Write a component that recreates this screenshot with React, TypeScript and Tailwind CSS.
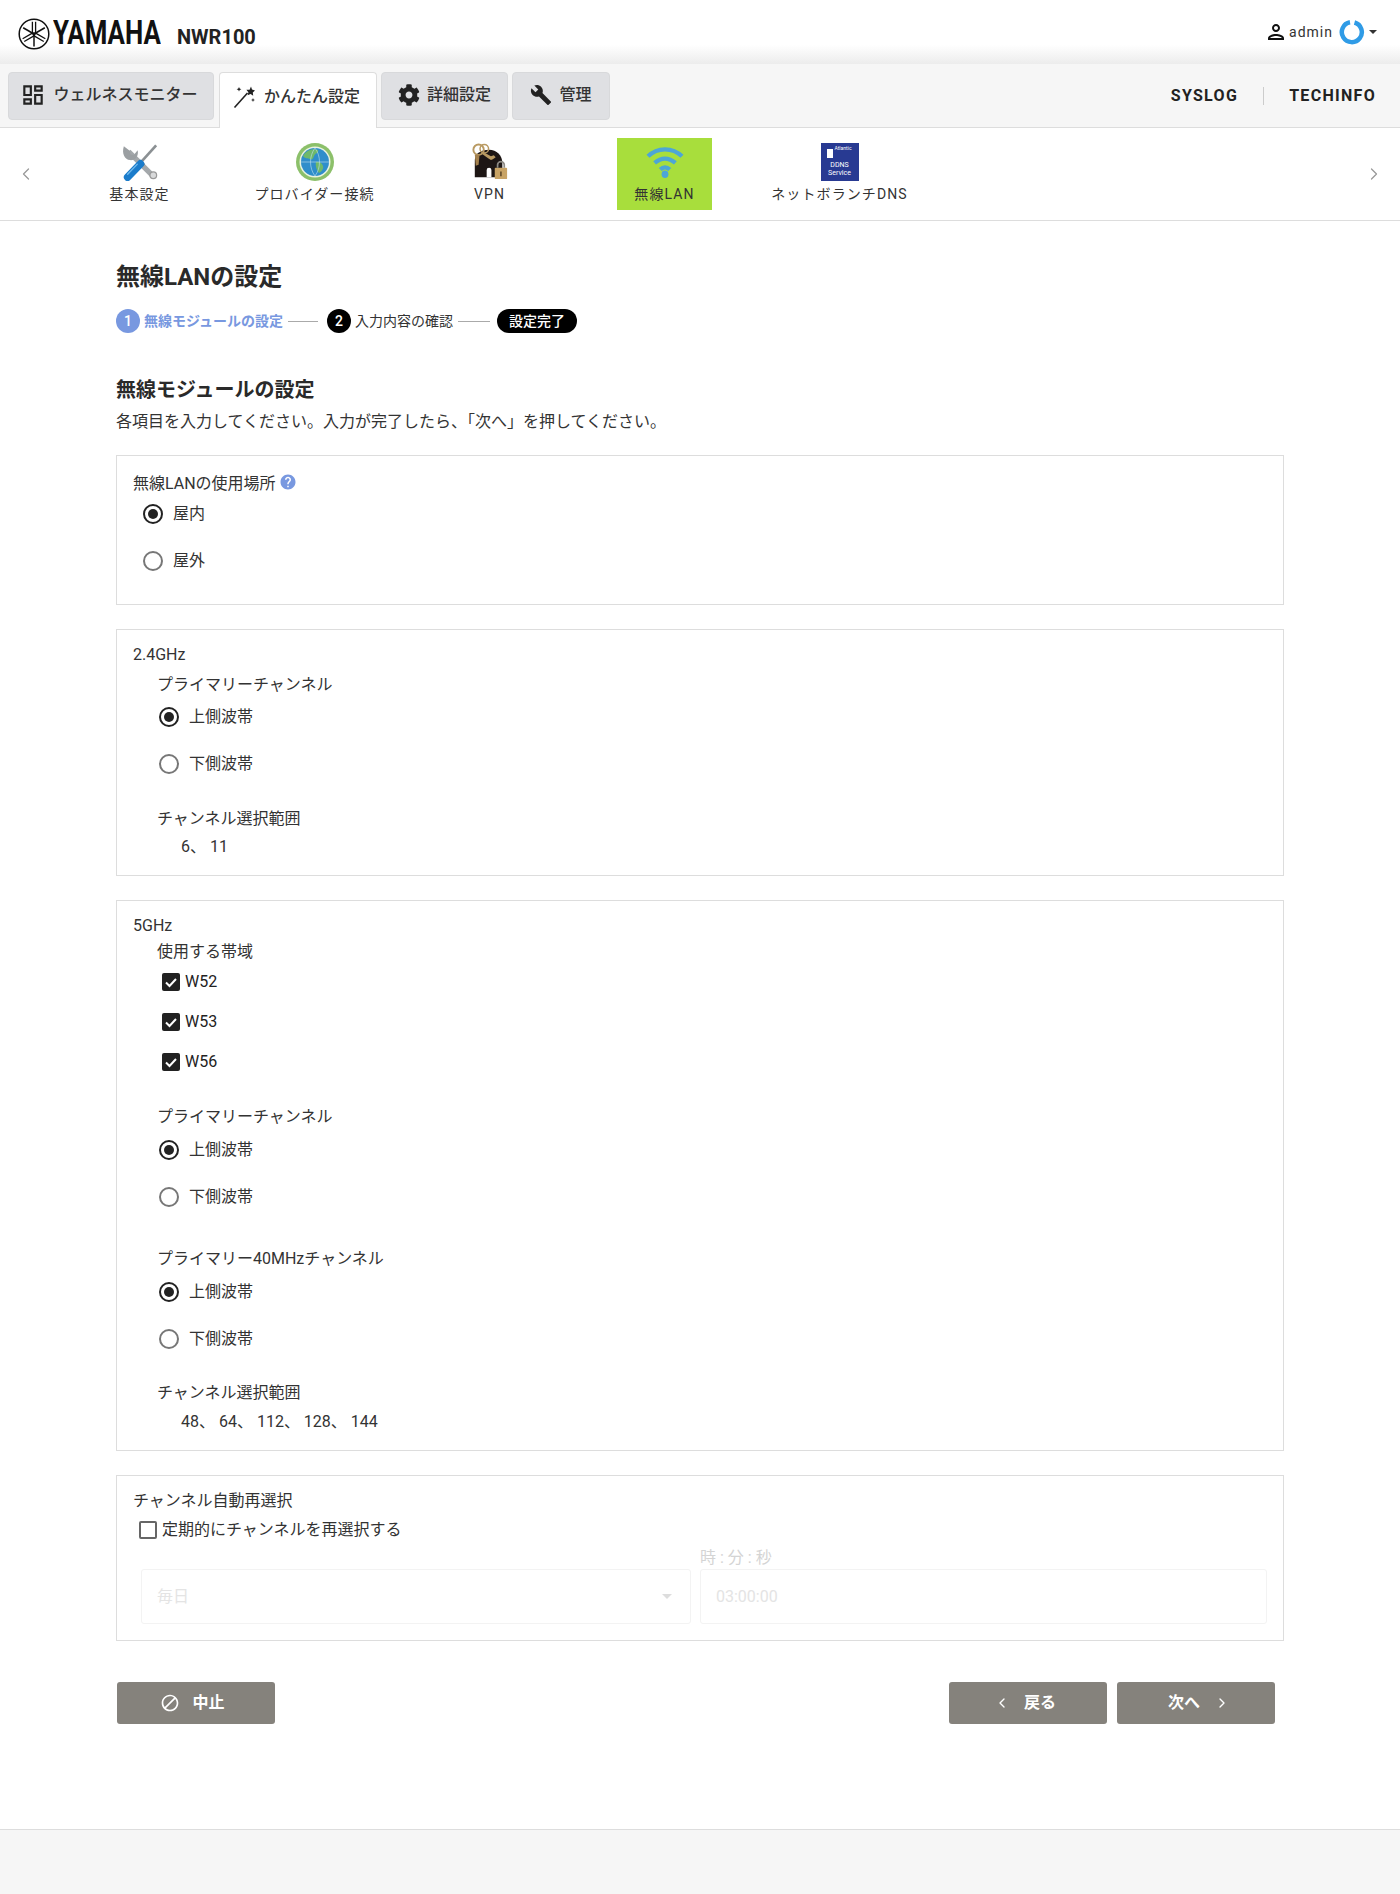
import { ChevronLeft, ChevronRight } from "lucide-react";
import { FaCog } from "react-icons/fa";
import { MdBuild, MdHelp, MdOutlineBlock, MdOutlineDashboard, MdOutlinePerson } from "react-icons/md";
import type { ReactNode } from "react";

const font = "[font-family:Roboto,'Noto_Sans_CJK_JP',sans-serif]";

function YamahaMark() {
  return (
    <svg viewBox="0 0 32 32" className="h-[32px] w-[32px] shrink-0">
      <circle cx="16" cy="16" r="14.8" fill="#fff" stroke="#111" strokeWidth="1.5" />
      {[0, 120, 240].map((a) => (
        <g key={a} transform={`rotate(${a} 16 16)`} stroke="#111" fill="none">
          <path d="M16 17.5V28.5" strokeWidth="1.5" />
          <path d="M14.4 3.8V14.5c0 1.2.6 2 1.6 2s1.6-.8 1.6-2V3.8" strokeWidth="1.3" />
        </g>
      ))}
    </svg>
  );
}

function WandIcon() {
  return (
    <svg viewBox="0 0 24 24" className="h-[24px] w-[24px]" fill="#222">
      <path d="M1.5 22.5L14.5 8" stroke="#222" strokeWidth="1.6" fill="none" />
      <path d="M18 1.5l1 3 3 1-2.2 2 .4 3.2-2.6-1.7-3 1.2.8-3-2-2.4 3.2-.1z" />
      <path d="M6 2l.7 1.6L8.4 4.3l-1.7.7L6 6.6l-.7-1.6L3.6 4.3l1.7-.7zM20 13l.6 1.4 1.4.6-1.4.6-.6 1.4-.6-1.4-1.4-.6 1.4-.6z" />
    </svg>
  );
}

function ToolsIcon() {
  return (
    <svg viewBox="0 0 40 40" className="h-[38px] w-[38px]">
      <path d="M8 9L33 34" stroke="#a4a8ab" strokeWidth="5.5" />
      <path d="M3 3.5l6.5 5 .5 3.5 3.5.5 4-5c1.5 6-2.5 11-8 10.5C4 18 .5 11 3 3.5z" fill="#9b9fa2" />
      <circle cx="34" cy="34" r="3.5" fill="#d8d9da" stroke="#999" strokeWidth="1.3" />
      <path d="M22 19L37 2.5" stroke="#8b9093" strokeWidth="2.8" />
      <path d="M20 17.5l5 4.5-2 2.5-5-4.5z" fill="#5b6164" />
      <path d="M20.5 22L7 36" stroke="#1b7ccb" strokeWidth="8" strokeLinecap="round" />
      <path d="M17 22.5L7 33" stroke="#6fb8ec" strokeWidth="1.5" strokeLinecap="round" />
    </svg>
  );
}

function GlobeIcon() {
  return (
    <svg viewBox="0 0 40 40" className="h-[40px] w-[40px]">
      <circle cx="20" cy="20" r="19" fill="#8cc06a" />
      <circle cx="20" cy="20" r="15.5" fill="#e8f2e0" />
      <circle cx="20" cy="20" r="14" fill="#2f8ecb" />
      <path d="M8 14c3-6 10-8 15-6 1 3-3 3-4 6s-2 4-4 3-5 0-7-3zM21 20c3-1 6 1 7 4s-2 6-4 7c-2-3-4-7-3-11z" fill="#6fb86b" />
      <path d="M6 20h28M20 6c-6 8-6 20 0 28M20 6c6 8 6 20 0 28" stroke="#bfe0ee" strokeWidth=".6" fill="none" />
    </svg>
  );
}

function VpnIcon() {
  return (
    <svg viewBox="0 0 40 40" className="h-[38px] w-[38px]">
      <path d="M4 36V18C4 10 12 7 19 7c8 0 14 6 14 14v15z" fill="#1d1614" />
      <path d="M19 26a2.5 2.5 0 012.5 2.5V36h-5v-7.5A2.5 2.5 0 0119 26z" fill="#fff" />
      <circle cx="8" cy="7" r="5.5" fill="none" stroke="#b99a62" strokeWidth="2" />
      <circle cx="14" cy="6" r="4.5" fill="none" stroke="#b99a62" strokeWidth="1.6" />
      <path d="M12 9l9 5 3-1 2 2-3 2-2 1-3-2-7-5z" fill="#b99a62" />
      <path d="M4 12l1 12 3-1 1-11z" fill="#a3804c" />
      <rect x="25" y="26" width="13" height="12" rx="1" fill="#c8a365" />
      <path d="M28 26v-3a3.5 3.5 0 017 0v3" fill="none" stroke="#8d8a84" strokeWidth="1.8" />
      <rect x="30.7" y="30" width="1.6" height="5" fill="#5a4526" />
    </svg>
  );
}

function WifiIcon() {
  return (
    <svg viewBox="0 0 40 36" className="h-[34px] w-[38px]" fill="none" stroke="#4da6d6" strokeWidth="4.5">
      <path d="M2 12C12 2 28 2 38 12" />
      <path d="M9 19c7-6 15-6 22 0" />
      <path d="M15 26c3-3 7-3 10 0" />
      <ellipse cx="20" cy="31" rx="3.6" ry="4" fill="#4da6d6" stroke="none" />
    </svg>
  );
}

function DdnsIcon() {
  return (
    <div className="flex h-[38px] w-[38px] flex-col items-center bg-[#283a92] pt-[2px] text-white">
      <div className="flex h-[14px] w-full items-start justify-center gap-[1px] text-[5px] leading-[5px]">
        <span className="mt-[4px] h-[9px] w-[6px] bg-white" />
        <span className="mt-[1px]">Atlantic</span>
      </div>
      <span className="mt-[2px] text-[7px] leading-[8px]">DDNS</span>
      <span className="text-[7px] leading-[8px]">Service</span>
    </div>
  );
}

function Tab({ icon, label, width, active }: { icon: ReactNode; label: string; width: string; active?: boolean }) {
  return (
    <div
      className={
        active
          ? `${width} -mb-[8px] flex h-[56px] items-center justify-center gap-[7px] rounded-t-[4px] border border-b-0 border-[#ddd] bg-white pb-[8px] text-[16px] font-medium text-[#333]`
          : `${width} flex h-[48px] items-center justify-center gap-[7px] rounded-[4px] border border-[#d8d9db] bg-[#dfe0e3] pb-[2px] text-[16px] font-medium text-[#333]`
      }
    >
      {icon}
      <span>{label}</span>
    </div>
  );
}

function NavItem({ icon, label, active }: { icon: ReactNode; label: string; active?: boolean }) {
  return (
    <div className="flex w-[175px] justify-center">
      <div className={active ? "flex h-[72px] w-[95px] flex-col items-center bg-[#a8de3c]" : "flex h-[72px] w-[150px] flex-col items-center"}>
        <div className="mt-[5px] flex h-[38px] items-center justify-center">{icon}</div>
        <span className="mt-[3px] text-[14px] leading-[20px] tracking-[1.1px] text-[#333] whitespace-nowrap">{label}</span>
      </div>
    </div>
  );
}

function Box({ children, className }: { children: ReactNode; className: string }) {
  return <section className={`border border-[#ddd] ${className}`}>{children}</section>;
}

function Radio({ label, checked, className }: { label: string; checked?: boolean; className: string }) {
  return (
    <div className={`flex h-6 items-center gap-[10px] text-[16px] text-[#333] ${className}`}>
      <span className={checked ? "flex h-5 w-5 items-center justify-center rounded-full border-2 border-[#222]" : "h-5 w-5 rounded-full border-2 border-[#777]"}>
        {checked && <span className="h-[10px] w-[10px] rounded-full bg-[#222]" />}
      </span>
      <span>{label}</span>
    </div>
  );
}

function Check({ label, className }: { label: string; className: string }) {
  return (
    <div className={`flex h-6 items-center gap-[5px] text-[16px] text-[#222] ${className}`}>
      <span className="flex h-[18px] w-[18px] items-center justify-center rounded-[2px] bg-[#222]">
        <svg viewBox="0 0 18 18" className="h-[18px] w-[18px]" fill="none" stroke="#fff" strokeWidth="2">
          <path d="M4 9.5l3.5 3.5L14 6" />
        </svg>
      </span>
      <span>{label}</span>
    </div>
  );
}

function Label({ children, className }: { children: ReactNode; className: string }) {
  return <div className={`h-6 text-[16px] leading-6 text-[#333] ${className}`}>{children}</div>;
}

function ActionButton({ children, className }: { children: ReactNode; className: string }) {
  return (
    <button className={`flex h-[42px] w-[158px] items-center justify-center rounded-[3px] bg-[#85827c] text-[16px] font-bold text-white ${className}`}>
      {children}
    </button>
  );
}

export default function App() {
  return (
    <div className={`flex min-h-[1894px] flex-col bg-white text-[#333] ${font}`}>
      {/* top header */}
      <header className="flex h-[64px] items-start justify-between bg-gradient-to-b from-white from-70% to-[#ececec] pl-[18px] pr-[23px]">
        <div className="mt-[16px] flex items-center">
          <YamahaMark />
          <div className="ml-[3px] w-[124px]">
            <span className="inline-block origin-left scale-x-[0.76] text-[34px] font-bold leading-[32px] text-[#111]">YAMAHA</span>
          </div>
          <span className="mt-[7px] text-[20px] font-bold leading-[24px] text-[#222]">NWR100</span>
        </div>
        <div className="mt-[19px] flex items-center">
          <MdOutlinePerson className="h-[24px] w-[24px] text-[#111]" />
          <span className="ml-[1px] text-[14px] tracking-[1px] text-[#333]">admin</span>
          <svg viewBox="0 0 26 26" className="ml-[6px] h-[26px] w-[26px]" fill="none" stroke="#2f9be6" strokeWidth="4.5">
            <path d="M15.5 3.5a10 10 0 11-4.5-.2" />
          </svg>
          <span className="ml-[4px] h-0 w-0 border-x-[4px] border-t-[4px] border-x-transparent border-t-[#333]" />
        </div>
      </header>

      {/* main tabs */}
      <nav className="flex h-[64px] items-start justify-between border-b border-[#ddd] bg-[#f6f6f6] pl-[8px] pr-[24px] pt-[8px]">
        <div className="flex">
          <Tab width="w-[206px] pr-[4px]" label="ウェルネスモニター" icon={<MdOutlineDashboard className="h-[26px] w-[26px] text-[#222]" />} />
          <Tab width="ml-[5px] w-[158px] pr-[3px]" active label="かんたん設定" icon={<WandIcon />} />
          <Tab width="ml-[4px] w-[127px]" label="詳細設定" icon={<FaCog className="h-[22px] w-[22px] text-[#222]" />} />
          <Tab width="ml-[4px] w-[98px]" label="管理" icon={<MdBuild className="h-[22px] w-[22px] text-[#222]" />} />
        </div>
        <div className="flex h-[48px] items-center text-[16px] font-bold tracking-[1.3px] text-[#222]">
          <span>SYSLOG</span>
          <span className="mx-[25px] h-[18px] w-px bg-[#ccc]" />
          <span>TECHINFO</span>
        </div>
      </nav>

      {/* sub navigation */}
      <div className="flex h-[93px] items-center border-b border-[#ddd]">
        <ChevronLeft className="ml-[16px] h-[20px] w-[20px] text-[#999]" strokeWidth={1.5} />
        <div className="ml-[16px] flex">
          <NavItem icon={<ToolsIcon />} label="基本設定" />
          <NavItem icon={<GlobeIcon />} label="プロバイダー接続" />
          <NavItem icon={<VpnIcon />} label="VPN" />
          <NavItem icon={<WifiIcon />} label="無線LAN" active />
          <NavItem icon={<DdnsIcon />} label="ネットボランチDNS" />
        </div>
        <ChevronRight className="ml-auto mr-[16px] h-[20px] w-[20px] text-[#999]" strokeWidth={1.5} />
      </div>

      <main className="flex flex-1 flex-col px-[116px]">
        <h1 className="mt-[40px] text-[24px] font-bold leading-[32px] text-[#2a2a2a]">無線LANの設定</h1>

        {/* steps */}
        <div className="mt-[16px] flex h-6 items-center text-[14px]">
          <span className="flex h-6 w-6 items-center justify-center rounded-full bg-[#7898e0] font-medium text-white">1</span>
          <span className="ml-[4px] font-bold text-[#7898e0]">無線モジュールの設定</span>
          <span className="ml-[5px] h-px w-[30px] bg-[#aaa]" />
          <span className="ml-[9px] flex h-6 w-6 items-center justify-center rounded-full bg-black font-medium text-white">2</span>
          <span className="ml-[4px] text-[#333]">入力内容の確認</span>
          <span className="ml-[5px] h-px w-[32px] bg-[#aaa]" />
          <span className="ml-[7px] flex h-6 w-[80px] items-center justify-center rounded-full bg-black font-medium text-white">設定完了</span>
        </div>

        <h2 className="mt-[43px] text-[20px] font-bold leading-[28px] text-[#2a2a2a]">無線モジュールの設定</h2>
        <p className="mt-[6px] text-[16px] leading-[24px] text-[#333]">各項目を入力してください。入力が完了したら、「次へ」を押してください。</p>

        {/* usage location */}
        <Box className="mt-[21px] pb-[31px] pl-[16px] pr-[16px] pt-[16px]">
          <div className="flex h-6 items-center text-[16px] text-[#333]">
            <span>無線LANの使用場所</span>
            <MdHelp className="mb-[5px] ml-[3px] h-[18px] w-[18px] text-[#7898e0]" />
          </div>
          <Radio className="ml-[10px] mt-[6px]" label="屋内" checked />
          <Radio className="ml-[10px] mt-[23px]" label="屋外" />
        </Box>

        {/* 2.4GHz */}
        <Box className="mt-[24px] pb-[16px] pl-[16px] pr-[16px] pt-[13px]">
          <div className="h-6 text-[16px] leading-6">2.4GHz</div>
          <div className="pl-[24px]">
            <Label className="mt-[6px]">プライマリーチャンネル</Label>
            <Radio className="ml-[2px] mt-[8px]" label="上側波帯" checked />
            <Radio className="ml-[2px] mt-[23px]" label="下側波帯" />
            <Label className="mt-[31px]">チャンネル選択範囲</Label>
            <Label className="mt-[4px] pl-[24px]">6、 11</Label>
          </div>
        </Box>

        {/* 5GHz */}
        <Box className="mt-[24px] pb-[16px] pl-[16px] pr-[16px] pt-[13px]">
          <div className="h-6 text-[16px] leading-6">5GHz</div>
          <div className="pl-[24px]">
            <Label className="mt-[2px]">使用する帯域</Label>
            <Check className="ml-[5px] mt-[6px]" label="W52" />
            <Check className="ml-[5px] mt-[16px]" label="W53" />
            <Check className="ml-[5px] mt-[16px]" label="W56" />
            <Label className="mt-[31px]">プライマリーチャンネル</Label>
            <Radio className="ml-[2px] mt-[9px]" label="上側波帯" checked />
            <Radio className="ml-[2px] mt-[23px]" label="下側波帯" />
            <Label className="mt-[38px]">プライマリー40MHzチャンネル</Label>
            <Radio className="ml-[2px] mt-[9px]" label="上側波帯" checked />
            <Radio className="ml-[2px] mt-[23px]" label="下側波帯" />
            <Label className="mt-[30px]">チャンネル選択範囲</Label>
            <Label className="mt-[5px] pl-[24px]">48、 64、 112、 128、 144</Label>
          </div>
        </Box>

        {/* auto reselection */}
        <Box className="mt-[24px] pb-[16px] pl-[16px] pr-[16px] pt-[13px]">
          <div className="h-6 text-[16px] leading-6">チャンネル自動再選択</div>
          <div className="mt-[5px] flex h-6 items-center gap-[5px] pl-[6px] text-[16px]">
            <span className="h-[18px] w-[18px] rounded-[2px] border-2 border-[#666]" />
            <span>定期的にチャンネルを再選択する</span>
          </div>
          <div className="mt-[6px] flex gap-[9px] pl-[8px]">
            <div className="flex w-[550px] flex-col">
              <div className="h-[20px]" />
              <div className="mt-px flex h-[55px] items-center justify-between rounded-[3px] border border-[#f3f3f3] pl-[15px] pr-[18px] text-[16px] text-[#e4e4e4]">
                <span>毎日</span>
                <span className="h-0 w-0 border-x-[5px] border-t-[5px] border-x-transparent border-t-[#ddd]" />
              </div>
            </div>
            <div className="flex flex-1 flex-col">
              <div className="h-[20px] text-[16px] leading-[20px] text-[#d4d4d4]">時 : 分 : 秒</div>
              <div className="mt-px flex h-[55px] items-center rounded-[3px] border border-[#f3f3f3] pl-[15px] text-[16px] text-[#e4e4e4]">03:00:00</div>
            </div>
          </div>
        </Box>

        {/* actions */}
        <div className="mt-[41px] flex items-start justify-between pl-px pr-[9px]">
          <ActionButton className="gap-[12px] pr-[7px]">
            <MdOutlineBlock className="h-[20px] w-[20px]" />
            <span>中止</span>
          </ActionButton>
          <div className="flex gap-[10px]">
            <ActionButton className="gap-[14px] pr-[6px]">
              <ChevronLeft className="h-[16px] w-[16px]" strokeWidth={2} />
              <span>戻る</span>
            </ActionButton>
            <ActionButton className="gap-[14px] pl-[6px]">
              <span>次へ</span>
              <ChevronRight className="h-[16px] w-[16px]" strokeWidth={2} />
            </ActionButton>
          </div>
        </div>
      </main>

      <footer className="h-[65px] border-t border-[#ddd] bg-[#f6f6f6]" />
    </div>
  );
}
